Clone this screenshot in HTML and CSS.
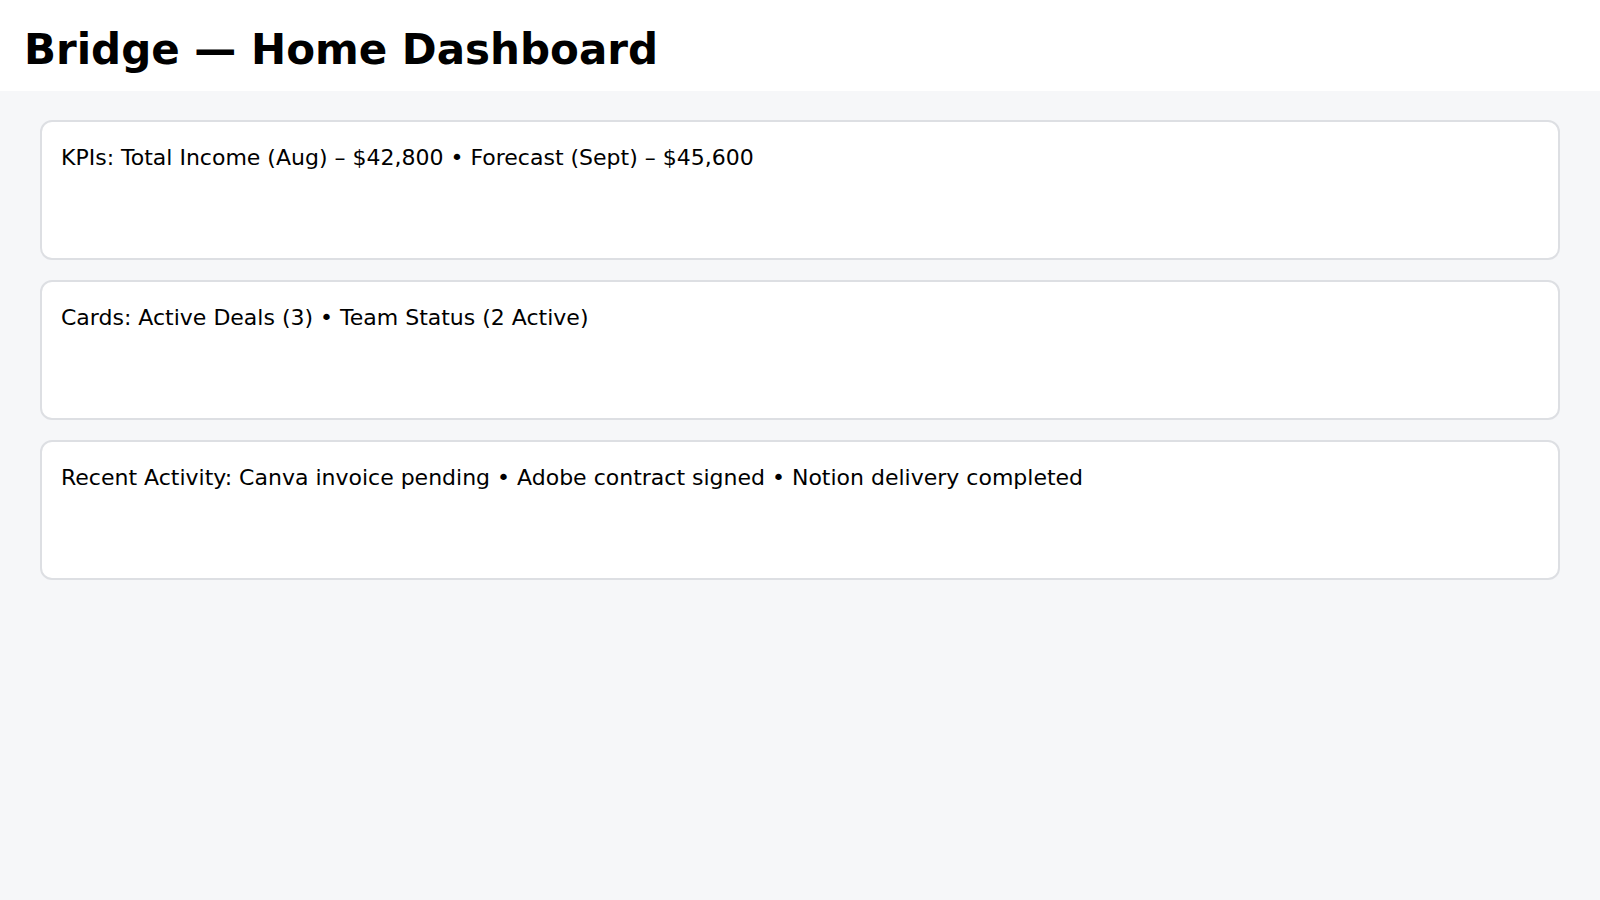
FILE: index.html
```html
<!DOCTYPE html>
<html lang="en">
<head>
<meta charset="utf-8">
<title>Bridge — Home Dashboard</title>
<link rel="stylesheet" href="styles.css">
</head>
<body>
<header class="top">
  <h1 class="title">Bridge — Home Dashboard</h1>
</header>
<main class="content">
  <section class="panel">KPIs: Total Income (Aug) – $42,800 • Forecast (Sept) – $45,600</section>
  <section class="panel">Cards: Active Deals (3) • Team Status (2 Active)</section>
  <section class="panel">Recent Activity: Canva invoice pending • Adobe contract signed • Notion delivery completed</section>
</main>
</body>
</html>
```
FILE: styles.css
```css
html, body {
  margin: 0;
  padding: 0;
}
body {
  font-family: "DejaVu Sans", sans-serif;
  background: #f6f7f9;
  color: #000;
  min-height: 900px;
}
.top {
  background: #ffffff;
  height: 91px;
  box-sizing: border-box;
  padding: 8px 24px 0;
  display: flex;
  align-items: center;
}
.title {
  margin: 0;
  font-size: 42px;
  font-weight: bold;
  line-height: 1;
}
.content {
  padding: 29px 40px;
  display: flex;
  flex-direction: column;
  gap: 20px;
}
.panel {
  background: #ffffff;
  border: 2px solid #dddfe3;
  border-radius: 12px;
  height: 140px;
  box-sizing: border-box;
  padding: 21px 19px 19px;
  font-size: 22px;
  line-height: 30px;
}
```
